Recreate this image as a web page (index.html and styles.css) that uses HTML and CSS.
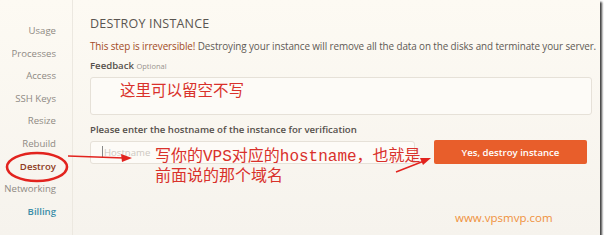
FILE: index.html
```html
<!DOCTYPE html>
<html lang="zh-CN">
<head>
  <meta charset="UTF-8" />
  <title>Destroy Instance</title>
  <link rel="stylesheet" href="styles.css">
</head>
<body>
  <div class="shot">
    <nav class="side">
      <a>Usage</a>
      <a>Processes</a>
      <a>Access</a>
      <a>SSH Keys</a>
      <a>Resize</a>
      <a>Rebuild</a>
      <a class="current">Destroy</a>
      <a>Networking</a>
      <a class="billing">Billing</a>
    </nav>

    <main class="panel">
      <h2>DESTROY INSTANCE</h2>
      <p class="warn"><span class="danger">This step is irreversible!</span> Destroying your instance will remove all the data on the disks and terminate your server.</p>

      <label class="lbl">Feedback <small>Optional</small></label>
      <div class="feedback"></div>

      <label class="lbl">Please enter the hostname of the instance for verification</label>
      <div class="confirm-row">
        <div class="host"><span class="caret"></span>Hostname</div>
        <button class="destroy-btn">Yes, destroy instance</button>
      </div>
    </main>

    <!-- annotations drawn over the screenshot -->
    <svg class="marks" width="600" height="235" viewBox="0 0 600 235">
      <ellipse cx="37" cy="167" rx="30" ry="14" fill="none" stroke="#e2231e" stroke-width="2.6"/>
      <line x1="68" y1="156" x2="124" y2="158" stroke="#e2231e" stroke-width="1.6"/>
      <polygon points="132,158 121,154 122,162" fill="#e2231e"/>
      <line x1="396" y1="172" x2="424" y2="161" stroke="#e2231e" stroke-width="1.4"/>
      <polygon points="431,158 420,158 423,165" fill="#e2231e"/>
    </svg>
    <div class="note note-feedback">这里可以留空不写</div>
    <div class="note note-host">写你的VPS对应的hostname，也就是<br>前面说的那个域名</div>
    <div class="site">www.vpsmvp.com</div>
  </div>
</body>
</html>
```

FILE: styles.css
```css
body {
  margin: 0;
  background: #fff;
  font-family: "Open Sans", "Liberation Sans", sans-serif;
}

.shot {
  position: relative;
  width: 600px;
  height: 235px;
  display: flex;
  background: linear-gradient(#fdfaf3, #f6f3ed);
  box-shadow: 2px 2px 2px rgba(0, 0, 0, 0.75);
  overflow: hidden;
}

.side {
  flex: none;
  width: 56px;
  padding: 20px 16px 0 0;
  border-right: 1px solid #ece8e0;
  display: flex;
  flex-direction: column;
  align-items: flex-end;
}

.side a {
  font-size: 9.6px;
  line-height: 22.6px;
  color: #8f8a84;
}

.side a.current {
  color: #8e3b1d;
  font-weight: 600;
}

.side a.billing {
  color: #3c8ea8;
  font-weight: 600;
}

.panel {
  flex: 1;
  min-width: 0;
  padding: 15px 10px 0 17px;
}

h2 {
  margin: 0;
  font-size: 12.5px;
  font-weight: 400;
  letter-spacing: 0.2px;
  color: #5a5550;
  line-height: 18px;
}

.warn {
  margin: 6px 0 0;
  font-size: 9.9px;
  letter-spacing: -0.1px;
  line-height: 14px;
  color: #5f5a55;
  white-space: nowrap;
}

.danger {
  color: #a24a25;
}

.lbl {
  display: block;
  margin-top: 6px;
  font-size: 9.6px;
  line-height: 14px;
  font-weight: 600;
  color: #55504b;
}

.lbl small {
  font-size: 7.5px;
  font-weight: 400;
  color: #99948e;
}

.feedback {
  margin-top: 4px;
  width: 500px;
  height: 36px;
  border: 1px solid #e6e1d8;
  border-radius: 3px;
  background: #fdfbf7;
}

.feedback + .lbl {
  margin-top: 8px;
}

.confirm-row {
  margin-top: 3px;
  display: flex;
  align-items: center;
  gap: 19px;
}

.host {
  width: 312px;
  height: 21px;
  border: 1px solid #e6e1d8;
  border-radius: 3px;
  background: #fdfbf7;
  display: flex;
  align-items: center;
  padding-left: 11px;
  font-size: 9.6px;
  color: #cdc8c1;
}

.caret {
  width: 1px;
  height: 12px;
  background: #888;
  margin-right: 1px;
}

.destroy-btn {
  width: 153px;
  height: 24px;
  border: 0;
  border-radius: 2px;
  background: #e85e2b;
  color: #fff;
  font-family: inherit;
  font-size: 9.6px;
  font-weight: 600;
}

.marks {
  position: absolute;
  left: 0;
  top: 0;
}

.note {
  position: absolute;
  font-family: "Liberation Mono", "Noto Sans CJK SC", monospace;
  color: #d9312b;
  font-size: 15.5px;
  line-height: 20px;
}

.note-feedback {
  left: 120px;
  top: 82px;
}

.note-host {
  left: 155px;
  top: 147px;
  font-size: 16px;
}

.site {
  position: absolute;
  left: 455px;
  top: 210px;
  font-size: 11.5px;
  color: #f0913c;
}
```
